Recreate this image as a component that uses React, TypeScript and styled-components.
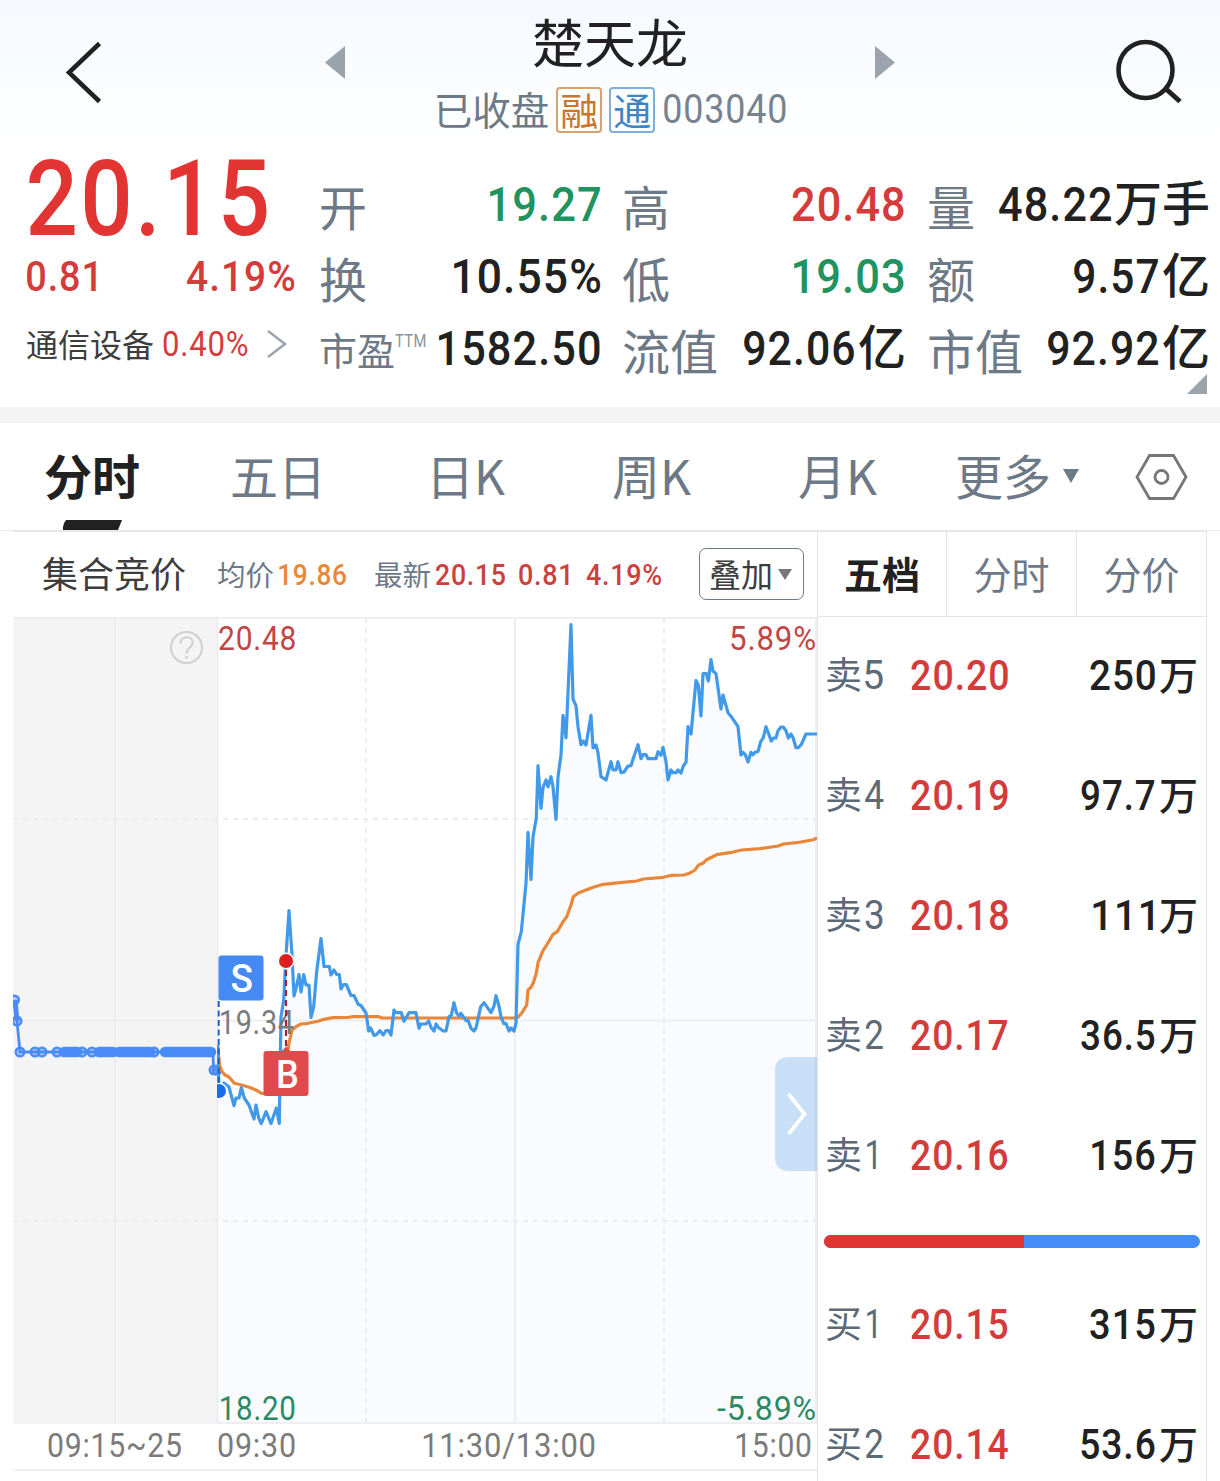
import React from "react";
import styled, { createGlobalStyle } from "styled-components";

const C = {
  ink: "#212121",
  dark: "#3d3d3d",
  label: "#6d7986",
  red: "#e33434",
  redSoft: "#d43c3c",
  green: "#21935f",
  orange: "#e8873a",
  line: "#e5e5e5",
  axis: "#7b7b7b",
  price: "#4199ea",
  auction: "#4a8cf7",
};

const NUM_FONT = `Roboto, "Noto Sans CJK SC", sans-serif`;
const TRACKING = 0.025;

const Global = createGlobalStyle`
  * { box-sizing: border-box; }
  body { margin: 0; background: #fff; }
`;

/* ---------- condensed numerals ---------- */

const canvas = document.createElement("canvas");
const ctx = canvas.getContext("2d")!;

function fitInk(text: string, size: number, weight: number, width: number) {
  ctx.font = `${weight} ${size}px ${NUM_FONT}`;
  const m = ctx.measureText(text);
  const ink = m.actualBoundingBoxRight + m.actualBoundingBoxLeft + (text.length - 1) * size * TRACKING;
  const scale = width / ink;
  return { scale, shift: m.actualBoundingBoxLeft * scale };
}

const NumBox = styled.span<{ $w: number; $size: number; $weight: number; $color: string }>`
  display: inline-block;
  flex: none;
  width: ${(p) => p.$w}px;
  font: ${(p) => p.$weight} ${(p) => p.$size}px/1 ${NUM_FONT};
  letter-spacing: ${(p) => p.$size * TRACKING}px;
  color: ${(p) => p.$color};
  white-space: nowrap;
`;
const NumInner = styled.span`
  display: inline-block;
  transform-origin: 0 50%;
`;

type NumProps = { children: string; w: number; size: number; weight?: number; color?: string };
function Num({ children, w, size, weight = 500, color = C.ink }: NumProps) {
  const f = fitInk(children, size, weight, w);
  return (
    <NumBox $w={w} $size={size} $weight={weight} $color={color}>
      <NumInner style={{ transform: `translateX(${f.shift}px) scaleX(${f.scale})` }}>{children}</NumInner>
    </NumBox>
  );
}

/* ---------- shell ---------- */

const Page = styled.main`
  width: 1220px;
  height: 1481px;
  overflow: hidden;
  display: flex;
  flex-direction: column;
  font-family: "Noto Sans CJK SC", sans-serif;
  color: ${C.ink};
  background: #fff;
`;

const Cjk = styled.span<{ $size: number; $color?: string; $weight?: number; $drop?: number }>`
  font-size: ${(p) => p.$size}px;
  line-height: 1;
  font-weight: ${(p) => p.$weight ?? 400};
  color: ${(p) => p.$color ?? C.ink};
  white-space: nowrap;
  margin-top: ${(p) => p.$drop ?? 0}px;
`;

const Header = styled.header`
  flex: none;
  height: 146px;
  display: grid;
  grid-template-columns: 325px 20px 530px 20px 325px;
  background: linear-gradient(#f5f9ff, #fff 145px);
`;
const HeaderSide = styled.div<{ $pad: string; $end?: boolean }>`
  display: flex;
  align-items: flex-start;
  justify-content: ${(p) => (p.$end ? "flex-end" : "flex-start")};
  padding: ${(p) => p.$pad};
`;
const TitleBlock = styled.div`
  display: flex;
  flex-direction: column;
  align-items: center;
`;
const TitleLine = styled.h1`
  margin: 0;
  height: 80px;
  font-size: 52px;
  line-height: 81px;
  font-weight: 400;
`;
const SubLine = styled.div`
  height: 60px;
  display: flex;
  align-items: center;
`;
const Tag = styled.span<{ $color: string; $edge: string }>`
  width: 46px;
  height: 46px;
  margin-left: 7px;
  padding-bottom: 2px;
  border: 2px solid ${(p) => p.$edge};
  border-radius: 4px;
  display: flex;
  align-items: center;
  justify-content: center;
  font-size: 38px;
  line-height: 38px;
  color: ${(p) => p.$color};
`;
const CodeSlot = styled.span`
  margin-left: 9px;
  display: flex;
`;

/* ---------- quote ---------- */

const Quote = styled.section`
  flex: none;
  height: 261px;
  display: grid;
  grid-template-columns: 268px 281px 283px 281px;
  column-gap: 24px;
  padding-left: 27px;
  align-items: start;
  position: relative;
`;
const QuoteMain = styled.div`
  display: flex;
  flex-direction: column;
`;
const BigRow = styled.div`
  height: 106px;
  display: flex;
  align-items: center;
  padding-left: 2px;
`;
const ChangeRow = styled.div`
  height: 50px;
  display: flex;
  align-items: center;
  justify-content: space-between;
`;
const SectorRow = styled.div`
  height: 84px;
  margin-left: -1px;
  display: flex;
  align-items: center;
`;
const Gap = styled.span<{ $w: number }>`
  flex: none;
  width: ${(p) => p.$w}px;
`;
const StatCol = styled.div<{ $pull?: number }>`
  display: flex;
  flex-direction: column;
  padding-top: 22px;
  margin-left: ${(p) => -(p.$pull ?? 0)}px;
`;
const Stat = styled.div`
  height: 72px;
  display: flex;
  align-items: center;
  justify-content: space-between;
`;
const StatLabel = styled.span<{ $size?: number }>`
  display: flex;
  align-items: flex-start;
  margin-top: 1px;
  font-size: ${(p) => p.$size ?? 48}px;
  line-height: 1;
  color: ${C.label};
`;
const Superscript = styled.span`
  display: flex;
  padding-top: 2px;
`;
const StatValue = styled.span<{ $inset?: number }>`
  display: flex;
  align-items: baseline;
  font-family: ${NUM_FONT};
  font-size: 48px;
  font-weight: 500;
  line-height: 1;
  white-space: nowrap;
  margin-right: ${(p) => p.$inset ?? 0}px;
`;
const Corner = styled.svg`
  position: absolute;
  right: 13px;
  top: 228px;
`;
const Divider = styled.div`
  flex: none;
  height: 16px;
  background: #f4f4f4;
`;

/* ---------- period tabs ---------- */

const Tabs = styled.nav`
  flex: none;
  height: 108px;
  border-bottom: 1px solid #e9e9e9;
  display: grid;
  grid-template-columns: 186px 196px 186px 186px 157px 180px 1fr;
  padding-left: 44px;
`;
const Tab = styled.div<{ $active?: boolean }>`
  position: relative;
  display: flex;
  align-items: center;
  height: 107px;
  padding-bottom: 5px;
  font-size: 48px;
  line-height: 1;
  font-weight: ${(p) => (p.$active ? 700 : 400)};
  color: ${(p) => (p.$active ? C.ink : C.label)};
`;
const ToolTab = styled.div`
  display: flex;
  align-items: center;
  height: 107px;
`;
const ActiveMark = styled.svg`
  position: absolute;
  left: 19px;
  bottom: 0;
`;
const Caret = styled.svg`
  margin: 4px 0 0 12px;
`;

/* ---------- body ---------- */

const Body = styled.div`
  flex: 1;
  margin: 0 13px;
  border-top: 1px solid ${C.line};
  display: grid;
  grid-template-columns: 804px 390px;
`;
const ChartPane = styled.section`
  display: flex;
  flex-direction: column;
`;
const Legend = styled.div`
  flex: none;
  height: 85px;
  display: flex;
  align-items: center;
  padding: 1px 0 0 29px;
`;
const OverlayButton = styled.button`
  width: 105px;
  height: 52px;
  margin-top: -2px;
  padding: 0 0 0 9px;
  display: flex;
  align-items: center;
  gap: 5px;
  border: 1px solid ${C.label};
  border-radius: 7px;
  background: #fff;
  font-family: inherit;
`;
const AxisRow = styled.div`
  flex: none;
  height: 47px;
  padding: 0 0 3px 35px;
  display: flex;
  align-items: center;
  border-bottom: 2px solid #f1f1f1;
`;
const NextPanel = styled.div`
  flex: 1;
  display: flex;
  align-items: flex-end;
  padding-left: 363px;
  gap: 115px;
`;
const Sliver = styled.i<{ $w: number; $color: string }>`
  width: ${(p) => p.$w}px;
  height: 1px;
  background: ${(p) => p.$color};
`;

const BookPane = styled.section`
  border-left: 1px solid ${C.line};
  border-right: 1px solid ${C.line};
  display: flex;
  flex-direction: column;
`;
const BookTabs = styled.div`
  flex: none;
  height: 85px;
  display: grid;
  grid-template-columns: 128px 130px 130px;
  border-bottom: 1px solid ${C.line};
`;
const BookTab = styled.div<{ $active?: boolean }>`
  display: flex;
  align-items: center;
  justify-content: center;
  padding-bottom: 2px;
  font-size: 38px;
  line-height: 1;
  font-weight: ${(p) => (p.$active ? 700 : 400)};
  color: ${(p) => (p.$active ? C.ink : C.label)};
  & + & {
    border-left: 1px solid ${C.line};
  }
`;
const BookRow = styled.div`
  flex: none;
  height: 120px;
  padding: 0 8px 3px 7px;
  display: grid;
  grid-template-columns: 86px 1fr auto;
  align-items: center;
`;
const Baseline = styled.span`
  display: flex;
  align-items: baseline;
  line-height: 1;
`;
const PriceCell = styled.span`
  display: flex;
  padding-top: 1px;
`;
const Ratio = styled.div`
  flex: none;
  height: 13px;
  margin: 18px 6px 18px 6px;
  border-radius: 7px;
  overflow: hidden;
  display: flex;
  background: #448cf8;
`;
const RatioSell = styled.i`
  background: ${C.red};
`;

/* ---------- data ---------- */

type Pt = [number, number];

const PRICE: Pt[] = [
  [217.7,1045],[219,1088],[224,1083],[229,1087],[234,1105.7],[236,1098],[239,1098],[241.3,1087.5],[244.3,1098],[249,1105],[254,1119],[256,1105],
  [258.7,1118],[261.3,1123.5],[266,1111.7],[271,1123.5],[276.3,1108],[279.3,1123.5],[279.7,1093],[281,1016.7],[283.7,1000],[285.7,960],
  [289,910.5],[292,955],[294,996],[296.3,987],[299,974.5],[301,992],[303.7,974.5],[306,985],[309,985],[311,1017.5],[313.7,1006.5],
  [316.7,971.5],[321,938.5],[324,966.5],[329.3,966.5],[331,975],[334,970],[336.7,974.5],[339.3,974.5],[341,989],[343.7,984.5],
  [346.3,984.5],[351,995.5],[354,995.5],[358.3,1004.5],[361,1005.5],[366,1013],[368.7,1031],[370.7,1028],[374,1035.3],[376,1035],
  [380,1030.7],[383.3,1035],[386,1030.7],[388.5,1030.7],[391,1035],[394,1010],[396,1012.7],[401.3,1012.7],[404,1021.3],[409,1012.7],
  [416,1012.7],[419,1028.3],[420.7,1024],[426,1024],[428.7,1021],[431.3,1028],[434,1031],[436,1024],[438.7,1027.7],[443.3,1031],
  [446,1031],[449,1016.7],[451.3,1015.3],[454,1002.7],[456.7,1013.3],[459,1016],[461,1013.3],[466,1020.7],[468.3,1020.7],[471,1028.3],
  [474,1031],[476,1028],[480.7,1006.7],[484,1002.7],[491,1012.7],[494,1006],[496,995.7],[499,1006],[501.3,1018],[504,1023.7],
  [506,1023.7],[509,1031],[511,1028],[514,1031],[516,1023],[518,944.3],[521.3,931.7],[526,883.3],[528,832.3],[531,879.3],[533,836.7],
  [536.3,818.3],[538,765.7],[541,808.3],[543,787.3],[546,780],[548,786.7],[551,776.7],[553,786.7],[556,819.3],[558,776.7],[561,755],
  [563,715.3],[566,737.7],[571,624.7],[573,699],[576,706],[578,726.7],[581,744.7],[583.3,741],[586,745],[591,715.3],[593,747.7],
  [596,745],[598,752.7],[601,776.7],[606,780],[611,761.7],[613,770],[616,770],[618,761.7],[621,772.7],[624,772],[628,766],[631,765.7],
  [633.3,758.3],[638,744.7],[641,758.7],[643,754.7],[646,754.7],[648,758.7],[656,758.7],[658,751.7],[661,755.3],[663,747.3],
  [666,761.7],[668,780],[671,770],[673,772.7],[676,772.7],[678,770],[681,773],[683.3,766],[686,762.3],[688,726.7],[691,734],
  [696,680.7],[698.3,685],[701,716],[703,673.7],[706.3,673.7],[708.3,681],[711,659.7],[713,671],[716,673.7],[721,709],[723,695],
  [728,712.7],[731.3,716.7],[738,726.7],[741,755],[743,752.3],[745.3,754.7],[748,762],[751,752.3],[753,754.7],[755.3,752],[758,751.7],
  [760.7,741.7],[763.3,737.7],[766,726.7],[771.3,741],[773.3,738],[776,738],[778,730.7],[781,727],[783.3,727],[786,730.7],[788.3,738],
  [791,734],[793.3,738.3],[796,747.7],[798.3,747.7],[801.3,744.7],[806,734],[817,734],
];

const AVERAGE: Pt[] = [
  [217.7,1047],[219.5,1065],[222.3,1072],[225,1075],[229,1077],[234.3,1083.3],[241.7,1085],[250,1087.5],[256,1090],[261.7,1093.3],
  [281,1095],[286,1066],[289,1043],[292,1030],[296,1026.7],[301,1024],[308,1023.3],[318,1021.3],[324,1019.3],[333,1017.7],[348,1017.5],
  [352,1016.7],[379,1016.7],[382,1018],[514,1018],[518,1017.3],[522,1012.7],[526.7,1005],[528,990],[531,987.3],[533.3,982.7],
  [536.3,973.3],[538,962.7],[543,950.7],[546.7,945],[552.7,934.7],[557.3,931.7],[563,921.7],[566.7,916.7],[571,905],[573.3,896.7],
  [578.3,893],[586,890],[593.3,887.3],[603.3,884.3],[620,882.7],[636.7,881],[643.3,879],[663.3,877.3],[671.7,875.3],[684,875],
  [690,873],[695,870],[698.3,865.3],[703.3,863],[706.7,859.7],[716.7,854.7],[730,852.7],[741.7,850],[760,848.7],[778.3,846],
  [783.3,844],[796.7,842.7],[813.3,839.7],[817,838],
];

const AUCTION: Pt[] = [[14.5,1000],[17,1021],[20,1052],[35,1052],[42,1052],[57,1052],[213,1052],[213.5,1070],[217,1070]];
const RINGS: Pt[] = [[14.5,1000],[17,1021],[20,1052],[35,1052],[42,1052],[57,1052],[82,1052],[92,1052],[154,1052],[214,1070],[217,1070]];
const CLUSTERS: Pt[] = [[64,77],[99,113],[119,150],[165,211]];

const toPoints = (pts: Pt[]) => pts.map((p) => p.join(",")).join(" ");

/* ---------- chart ---------- */

type ChartTextProps = { x: number; w: number; y: number; size: number; weight?: number; fill: string; children: string };
function ChartText({ x, w, y, size, weight = 400, fill, children }: ChartTextProps) {
  const f = fitInk(children, size, weight, w);
  return (
    <text
      transform={`translate(${x + f.shift} ${y}) scale(${f.scale} 1)`}
      fontFamily={NUM_FONT}
      fontSize={size}
      fontWeight={weight}
      letterSpacing={size * TRACKING}
      fill={fill}
    >
      {children}
    </text>
  );
}

const ChartSvg = styled.svg`
  flex: none;
  display: block;
  overflow: visible;
`;

function Chart() {
  return (
    <ChartSvg width="804" height="807" viewBox="13 617 804 807">
      <defs>
        <clipPath id="session">
          <rect x="217" y="617" width="600" height="807" />
        </clipPath>
        <clipPath id="auction">
          <rect x="13" y="617" width="208" height="807" />
        </clipPath>
      </defs>
      <rect x="13" y="617" width="204.5" height="807" fill="#f4f4f4" />
      <polygon points={`217.7,1424 ${toPoints(PRICE)} 817,1424`} fill="#f9fbff" />
      <g stroke="#ebecef" strokeWidth="2" fill="none">
        <path d="M13 618H817M13 1020.500H817M217 1423H817" strokeWidth="1.700" />
        <path d="M115 617V1424M515 617V1424" strokeWidth="1.700" />
        <path d="M217.500 617V1424M816 617V1424" strokeWidth="1.500" />
        <path d="M366 618V1424M664 618V1424" strokeDasharray="5 5" />
        <path d="M13 819H817M13 1221H817" strokeDasharray="5 5" />
      </g>

      <circle cx="186.500" cy="647.500" r="15.500" fill="none" stroke="#cfcfcf" strokeWidth="2" />
      <path
        d="M180.500 643.500c0-4 2.600-6.300 6.200-6.300 3.600 0 6 2.300 6 5.400 0 2.700-1.600 4-3.500 5.500-1.900 1.500-2.700 2.600-2.700 5.400"
        fill="none" stroke="#cfcfcf" strokeWidth="2"
      />
      <circle cx="186.500" cy="657.300" r="1.500" fill="#cfcfcf" />

      <g stroke={C.auction} fill="none" clipPath="url(#auction)">
        <path d="M15 1000L17 1021" strokeWidth="5" />
        <polyline points={toPoints(AUCTION)} strokeWidth="2.800" />
        {RINGS.map(([x, y], i) => (
          <circle key={i} cx={x} cy={y} r="4.300" strokeWidth="2.400" fill={C.auction} fillOpacity="0.4" />
        ))}
        {CLUSTERS.map(([a, b]) => (
          <path key={a} d={`M${a} 1052H${b}`} strokeWidth="10.500" strokeLinecap="round" />
        ))}
      </g>

      <g clipPath="url(#session)" fill="none" strokeWidth="3.200" strokeLinejoin="round">
        <polyline points={toPoints(AVERAGE)} stroke={C.orange} />
        <polyline points={toPoints(PRICE)} stroke={C.price} />
        <circle cx="219" cy="1091" r="8.500" fill="#fff" />
        <circle cx="219" cy="1091" r="7" fill="#1a6df0" />
      </g>

      <ChartText x={219} w={76} y={650} size={33} fill="#c24545">20.48</ChartText>
      <ChartText x={731} w={84} y={650} size={33} fill="#c24545">5.89%</ChartText>
      <ChartText x={220.500} w={74} y={1420} size={33} fill="#2c8a62">18.20</ChartText>
      <ChartText x={717} w={98} y={1420} size={33} fill="#2c8a62">-5.89%</ChartText>
      <ChartText x={220.500} w={73} y={1034} size={33} fill={C.axis}>19.34</ChartText>

      <path d="M218.700 1001V1084" stroke="#1c62c4" strokeWidth="2" strokeDasharray="6 3.500" />
      <path d="M286 970V1047" stroke="#9c2433" strokeWidth="2.200" strokeDasharray="6 4" />
      <circle cx="286" cy="961" r="8.500" fill="#fff" />
      <circle cx="286" cy="961" r="7" fill="#dc2020" />

      <rect x="218.500" y="955.500" width="45" height="45" rx="3" fill="#448af2" />
      <ChartText x={231.500} w={20.500} y={992} size={38} weight={500} fill="#fff">S</ChartText>
      <path d="M281 1052L286 1046.500L291 1052Z" fill="#e04a4d" />
      <rect x="263.500" y="1051" width="45" height="45" rx="3" fill="#e04a4d" />
      <ChartText x={278} w={20} y={1088} size={38} weight={500} fill="#fff">B</ChartText>

      <path d="M817 1057H789Q775 1057 775 1071V1157Q775 1171 789 1171H817Z" fill="#c8dff7" />
      <path d="M815.800 1057V1171" stroke="#bfd3e8" strokeWidth="1.800" />
      <path d="M788.500 1094L804.500 1114L788.500 1134" fill="none" stroke="#fff" strokeWidth="3.800" />
    </ChartSvg>
  );
}

/* ---------- order book ---------- */

type Level = { side: string; n: string; nw: number; price: string; vol: string; vw: number };
const SELLS: Level[] = [
  { side: "卖", n: "5", nw: 18, price: "20.20", vol: "250", vw: 65 },
  { side: "卖", n: "4", nw: 19, price: "20.19", vol: "97.7", vw: 74 },
  { side: "卖", n: "3", nw: 18, price: "20.18", vol: "111", vw: 60 },
  { side: "卖", n: "2", nw: 18, price: "20.17", vol: "36.5", vw: 74 },
  { side: "卖", n: "1", nw: 9, price: "20.16", vol: "156", vw: 63 },
];
const BUYS: Level[] = [
  { side: "买", n: "1", nw: 9, price: "20.15", vol: "315", vw: 65 },
  { side: "买", n: "2", nw: 18, price: "20.14", vol: "53.6", vw: 74 },
];

function LevelRow({ l }: { l: Level }) {
  return (
    <BookRow>
      <Baseline>
        <Cjk $size={37} $color="#5c6a77">{l.side}</Cjk>
        <Gap $w={l.n === "1" ? 5 : 3} />
        <Num w={l.nw} size={41} weight={400} color="#5c6a77">{l.n}</Num>
      </Baseline>
      <PriceCell><Num w={97} size={42} color={C.redSoft}>{l.price}</Num></PriceCell>
      <Baseline>
        <Num w={l.vw} size={42}>{l.vol}</Num>
        <Gap $w={l.vol === "111" ? 6 : 4} />
        <Cjk $size={39} $weight={500}>万</Cjk>
      </Baseline>
    </BookRow>
  );
}

export default function App() {
  return (
    <Page>
      <Global />
      <Header>
        <HeaderSide $pad="40px 0 0 64px">
          <svg width="40" height="66" viewBox="0 0 40 66" fill="none" stroke={C.ink} strokeWidth="4.500">
            <path d="M35.500 3.500L5 32.500L35.500 61.500" />
          </svg>
        </HeaderSide>
        <HeaderSide $pad="46px 0 0 0">
          <svg width="20" height="33"><path d="M20 0V33L0 16.500Z" fill="#9ba3ac" /></svg>
        </HeaderSide>
        <TitleBlock>
          <TitleLine>楚天龙</TitleLine>
          <SubLine>
            <Cjk $size={38.500} $color={C.label} $drop={-3}>已收盘</Cjk>
            <Tag $color="#c8762a" $edge="#d9a26c">融</Tag>
            <Tag $color="#3f85c6" $edge="#7db0dc">通</Tag>
            <CodeSlot><Num w={122} size={40} weight={400} color="#77828e">003040</Num></CodeSlot>
          </SubLine>
        </TitleBlock>
        <HeaderSide $pad="46px 0 0 0">
          <svg width="20" height="33"><path d="M0 0V33L20 16.500Z" fill="#9ba3ac" /></svg>
        </HeaderSide>
        <HeaderSide $pad="38px 36px 0 0" $end>
          <svg width="70" height="68" viewBox="0 0 70 68" fill="none" stroke={C.ink} strokeWidth="4.600">
            <ellipse cx="31.500" cy="32" rx="27" ry="28" />
            <path d="M51.500 50.500L66 63.500" strokeWidth="5" />
          </svg>
        </HeaderSide>
      </Header>

      <Quote>
        <QuoteMain>
          <BigRow><Num w={238} size={105} color={C.red}>20.15</Num></BigRow>
          <ChangeRow>
            <Num w={69} size={42} color={C.redSoft}>0.81</Num>
            <Num w={108} size={42} color={C.redSoft}>4.19%</Num>
          </ChangeRow>
          <SectorRow>
            <Cjk $size={32} $color={C.dark} $drop={-3}>通信设备</Cjk>
            <Gap $w={9} />
            <Num w={85} size={35} weight={400} color={C.redSoft}>0.40%</Num>
            <Gap $w={18} />
            <svg width="22" height="30" fill="none" stroke="#9aa3ad" strokeWidth="2.500"><path d="M2 2L19 15L2 28" /></svg>
          </SectorRow>
        </QuoteMain>
        <StatCol>
          <Stat><StatLabel>开</StatLabel><StatValue><Num w={110} size={49} color={C.green}>19.27</Num></StatValue></Stat>
          <Stat><StatLabel>换</StatLabel><StatValue><Num w={146} size={49}>10.55%</Num></StatValue></Stat>
          <Stat>
            <StatLabel $size={38}>
              市盈
              <Superscript><Num w={31} size={18} weight={400} color="#8a949e">TTM</Num></Superscript>
            </StatLabel>
            <StatValue><Num w={161} size={49}>1582.50</Num></StatValue>
          </Stat>
        </StatCol>
        <StatCol $pull={2}>
          <Stat><StatLabel>高</StatLabel><StatValue $inset={3}><Num w={112} size={49} color={C.redSoft}>20.48</Num></StatValue></Stat>
          <Stat><StatLabel>低</StatLabel><StatValue $inset={3}><Num w={110} size={49} color={C.green}>19.03</Num></StatValue></Stat>
          <Stat><StatLabel>流值</StatLabel><StatValue $inset={1}><Num w={110} size={49}>92.06</Num><Gap $w={4} />亿</StatValue></Stat>
        </StatCol>
        <StatCol $pull={4}>
          <Stat><StatLabel>量</StatLabel><StatValue $inset={2}><Num w={112} size={49}>48.22</Num><Gap $w={3} />万手</StatValue></Stat>
          <Stat><StatLabel>额</StatLabel><StatValue $inset={2}><Num w={84} size={49}>9.57</Num><Gap $w={4} />亿</StatValue></Stat>
          <Stat><StatLabel>市值</StatLabel><StatValue $inset={2}><Num w={110} size={49}>92.92</Num><Gap $w={4} />亿</StatValue></Stat>
        </StatCol>
        <Corner width="20" height="20"><path d="M20 0V20H0Z" fill="#9ba3ac" /></Corner>
      </Quote>
      <Divider />

      <Tabs>
        <Tab $active>
          分时
          <ActiveMark width="60" height="10"><path d="M3 0H59L55 10H0V7Q1 2 3 0Z" fill={C.ink} /></ActiveMark>
        </Tab>
        <Tab>五日</Tab>
        <Tab>日K</Tab>
        <Tab>周K</Tab>
        <Tab>月K</Tab>
        <Tab>
          更多
          <Caret width="17" height="14"><path d="M0 0H16L8 14Z" fill={C.label} /></Caret>
        </Tab>
        <ToolTab>
          <svg width="54" height="50" viewBox="0 0 54 50" fill="none" stroke="#777" strokeWidth="2.800">
            <path d="M14.500 3.500H38.500L51 25L38.500 46.500H14.500L2 25Z" />
            <circle cx="26.500" cy="25" r="6.500" />
          </svg>
        </ToolTab>
      </Tabs>

      <Body>
        <ChartPane>
          <Legend>
            <Cjk $size={36} $color={C.dark} $drop={-6}>集合竞价</Cjk>
            <Gap $w={31} />
            <Cjk $size={28.500} $color={C.label} $drop={-2}>均价</Cjk>
            <Gap $w={5} />
            <Num w={67} size={30} color={C.orange}>19.86</Num>
            <Gap $w={28} />
            <Cjk $size={28.500} $color={C.label} $drop={-2}>最新</Cjk>
            <Gap $w={5} />
            <Num w={69} size={30} color="#cc4040">20.15</Num>
            <Gap $w={14} />
            <Num w={50} size={30} color="#cc4040">0.81</Num>
            <Gap $w={17} />
            <Num w={75} size={30} color="#cc4040">4.19%</Num>
            <Gap $w={38} />
            <OverlayButton>
              <Cjk $size={32} $color={C.dark} $drop={-3}>叠加</Cjk>
              <svg width="15" height="11"><path d="M0 0H14L7 11Z" fill="#777" /></svg>
            </OverlayButton>
          </Legend>
          <Chart />
          <AxisRow>
            <Num w={133} size={34} weight={400} color={C.axis}>09:15~25</Num>
            <Gap $w={37} />
            <Num w={77} size={34} weight={400} color={C.axis}>09:30</Num>
            <Gap $w={128} />
            <Num w={172} size={34} weight={400} color={C.axis}>11:30/13:00</Num>
            <Gap $w={141} />
            <Num w={75} size={34} weight={400} color={C.axis}>15:00</Num>
          </AxisRow>
          <NextPanel>
            <Sliver $w={26} $color="#dedede" />
            <Sliver $w={4} $color="#7a8794" />
          </NextPanel>
        </ChartPane>
        <BookPane>
          <BookTabs>
            <BookTab $active>五档</BookTab>
            <BookTab>分时</BookTab>
            <BookTab>分价</BookTab>
          </BookTabs>
          {SELLS.map((l) => <LevelRow key={l.n} l={l} />)}
          <Ratio><RatioSell style={{ width: `${(200 / 376) * 100}%` }} /></Ratio>
          {BUYS.map((l) => <LevelRow key={l.n} l={l} />)}
        </BookPane>
      </Body>
    </Page>
  );
}
